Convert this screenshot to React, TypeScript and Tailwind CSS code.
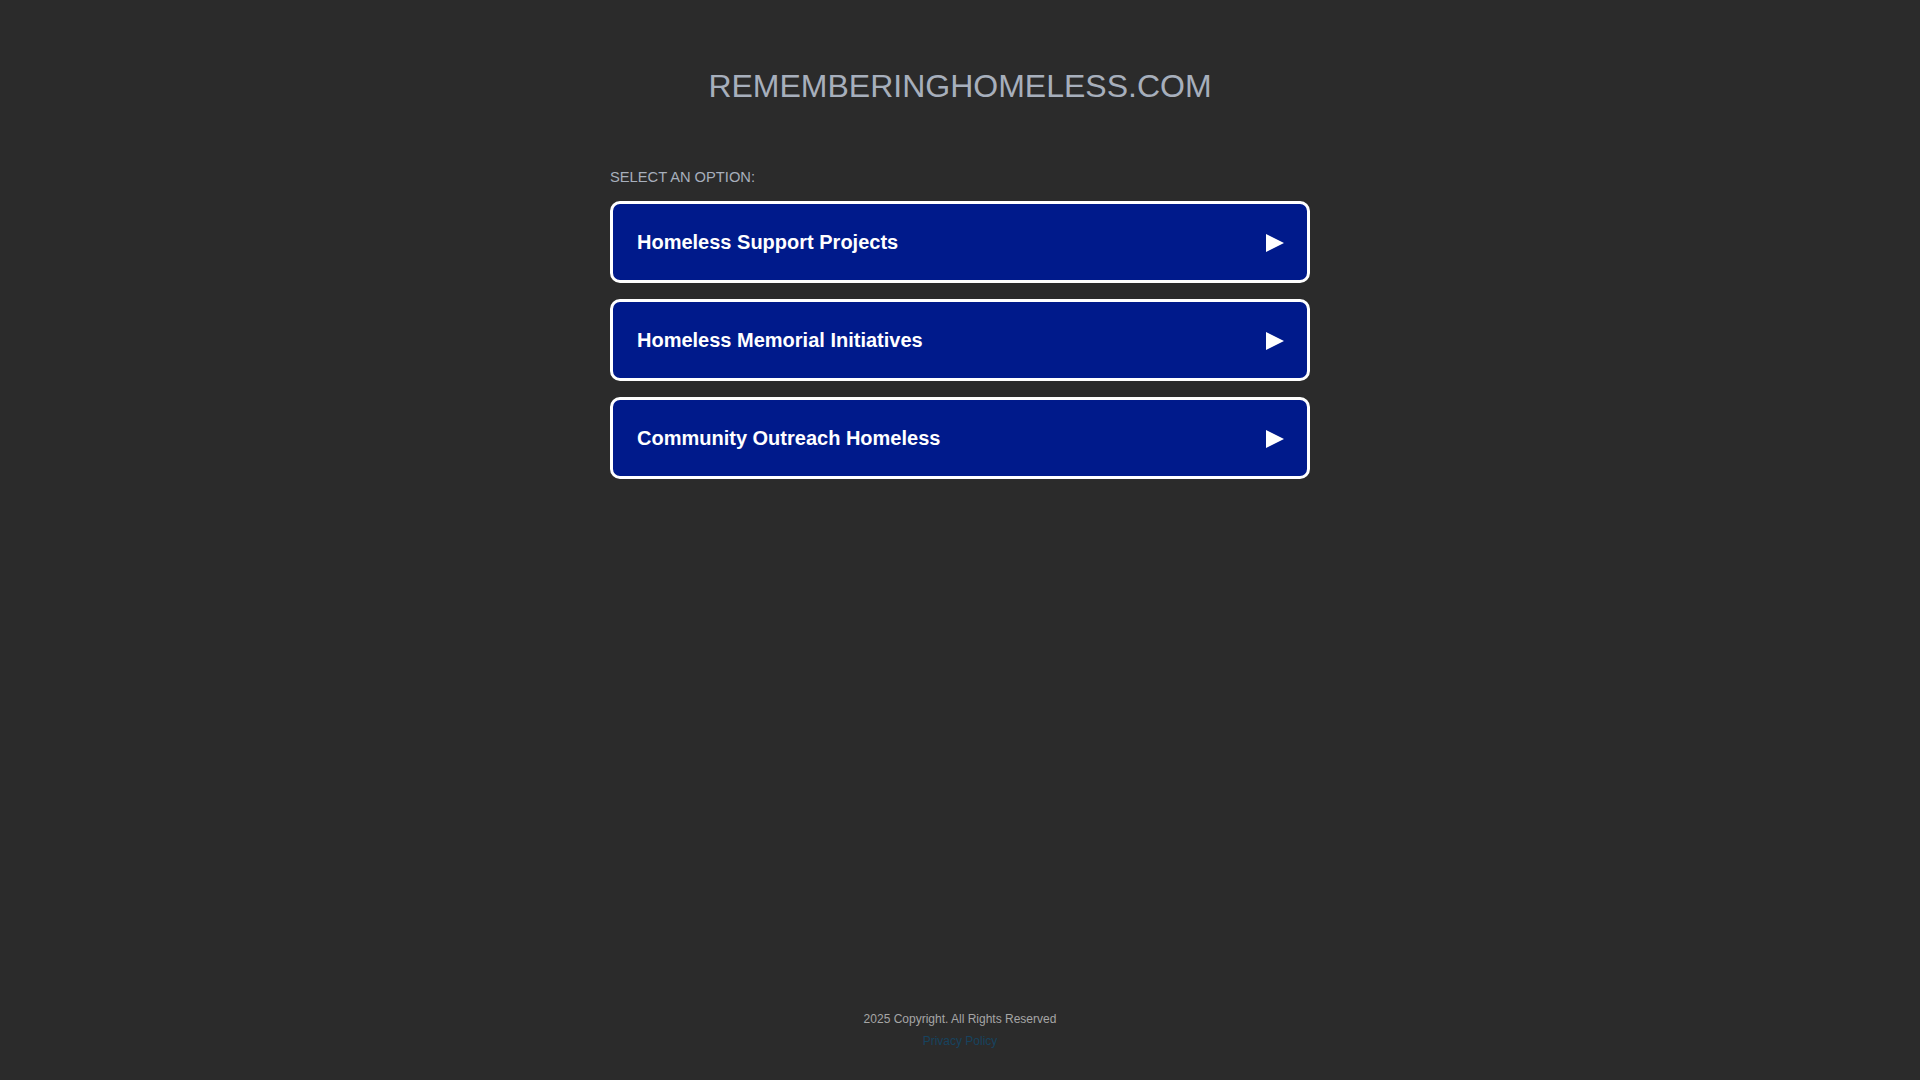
const options = [
  'Homeless Support Projects',
  'Homeless Memorial Initiatives',
  'Community Outreach Homeless',
];

function Arrow() {
  return (
    <svg width="20" height="20" viewBox="0 0 20 20" className="shrink-0 mt-[2px]">
      <polygon points="1,1 19,10 1,19" fill="#ffffff" />
    </svg>
  );
}

export default function App() {
  return (
    <div
      className="min-h-screen bg-[#2b2b2b] flex flex-col items-center"
      style={{ fontFamily: '"Liberation Sans", Arial, sans-serif' }}
    >
      <main className="w-[700px] flex flex-col pt-[67px]">
        {/* domain name */}
        <h1 className="text-center text-[32px] leading-[38px] text-[#a7afbc] font-normal">
          REMEMBERINGHOMELESS.COM
        </h1>

        <p className="mt-[63px] mb-[15px] text-[14.7px] leading-[18px] text-[#a7afbc]">
          SELECT AN OPTION:
        </p>

        <div className="flex flex-col gap-4">
          {options.map((label) => (
            <a
              key={label}
              href="#"
              className="h-[82px] flex items-center justify-between rounded-[10px] border-[3px] border-white bg-[#001a8b] pl-[24px] pr-[22px] text-white"
            >
              <span className="text-[20px] font-bold">{label}</span>
              <Arrow />
            </a>
          ))}
        </div>
      </main>

      <footer className="mt-auto pb-[32px] flex flex-col items-center text-[12px] leading-[14px]">
        <p className="text-[#a6a6a6]">2025 Copyright. All Rights Reserved</p>
        <a href="#" className="mt-[8px] text-[#17435f]">
          Privacy Policy
        </a>
      </footer>
    </div>
  );
}
